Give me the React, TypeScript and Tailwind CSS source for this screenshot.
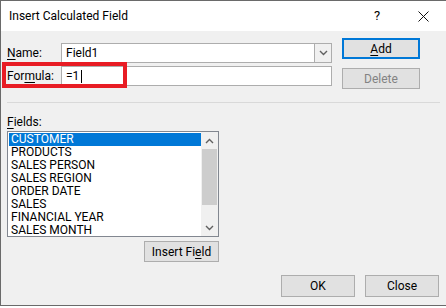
import React from 'react';

const fields = [
  'CUSTOMER',
  'PRODUCTS',
  'SALES PERSON',
  'SALES REGION',
  'ORDER DATE',
  'SALES',
  'FINANCIAL YEAR',
  'SALES MONTH',
];

function Chevron({ up = false, className = '' }: { up?: boolean; className?: string }) {
  return (
    <svg width="9" height="6" viewBox="0 0 9 6" className={className}>
      <polyline
        points={up ? '1,5 4.5,1.5 8,5' : '1,1 4.5,4.5 8,1'}
        fill="none"
        stroke="currentColor"
        strokeWidth="1.4"
      />
    </svg>
  );
}

function Btn({
  children,
  focused = false,
  disabled = false,
  className = '',
}: {
  children: React.ReactNode;
  focused?: boolean;
  disabled?: boolean;
  className?: string;
}) {
  return (
    <div
      className={`flex items-center justify-center bg-[#e1e1e1] ${
        focused ? 'border-2 border-[#0078d7]' : 'border border-[#adadad]'
      } ${disabled ? 'text-[#838383]' : 'text-black'} ${className}`}
    >
      {children}
    </div>
  );
}

export default function App() {
  return (
    <div className="w-[446px] h-[308px] bg-white overflow-hidden text-[12px] text-black font-['Roboto',sans-serif]">
      <div className="h-[306px] border-l border-t border-b border-[#6a6a6a] bg-[#f0f0f0] flex flex-col">
        {/* Title bar */}
        <div className="h-[30px] bg-white flex items-center pl-[8px] shrink-0">
          <span className="flex-1">Insert Calculated Field</span>
          <span className="w-[10px] text-center text-[13px] mr-[36px]">?</span>
          <svg width="11" height="11" viewBox="0 0 11 11" className="mr-[17px]">
            <path d="M0.5 0.5 L10.5 10.5 M10.5 0.5 L0.5 10.5" stroke="#111" strokeWidth="1" />
          </svg>
        </div>

        {/* Body */}
        <div className="relative flex-1 flex flex-col px-[6px] pt-[7px]">
          <div className="flex">
            <div className="w-[325px] pt-[5px] flex flex-col gap-[3px]">
              <div className="flex items-center h-[20px]">
                <span className="w-[54px]">
                  <span className="underline underline-offset-2">N</span>ame:
                </span>
                <div className="flex-1 h-[20px] flex bg-white border border-[#adadad]">
                  <span className="flex-1 pl-[4px] leading-[18px]">Field1</span>
                  <div className="w-[17px] bg-[#f0f0f0] border-l border-[#adadad] flex items-center justify-center text-[#606060]">
                    <Chevron />
                  </div>
                </div>
              </div>
              <div className="flex items-center h-[20px]">
                <span className="w-[54px]">
                  For<span className="underline underline-offset-2">m</span>ula:
                </span>
                <div className="flex-1 h-[20px] flex items-center bg-white border border-[#adadad] pl-[4px]">
                  <span>=1</span>
                  <span className="w-px h-[13px] bg-black ml-[2px]" />
                </div>
              </div>
            </div>
            <div className="ml-[10px] w-[78px] flex flex-col gap-[9px]">
              <Btn focused className="h-[21px]">
                <span>
                  <span className="underline underline-offset-2">A</span>dd
                </span>
              </Btn>
              <Btn disabled className="h-[21px]">
                Delete
              </Btn>
            </div>
          </div>

          <div className="mt-[13px] h-px bg-[#d9d9d9]" />

          <div className="mt-[11px] leading-[16px]">
            <span className="underline underline-offset-2">F</span>ields:
          </div>

          <div className="mt-[1px] w-[212px] flex flex-col items-end">
            <div className="w-[212px] h-[106px] bg-white border border-[#828790] flex">
              <div className="flex-1 pl-px pt-px">
                {fields.map((f, i) => (
                  <div
                    key={f}
                    className={`h-[13px] leading-[13px] pl-[2px] ${
                      i === 0 ? 'bg-[#0078d7] text-white' : ''
                    }`}
                  >
                    {f}
                  </div>
                ))}
              </div>
              <div className="w-[17px] bg-[#f0f0f0] flex flex-col items-center text-[#606060]">
                <div className="h-[17px] flex items-center justify-center">
                  <Chevron up />
                </div>
                <div className="w-[15px] h-[56px] bg-[#cdcdcd]" />
                <div className="flex-1" />
                <div className="h-[17px] flex items-center justify-center">
                  <Chevron />
                </div>
              </div>
            </div>
            <Btn className="mt-[4px] w-[75px] h-[21px]">
              <span>
                Insert Fi<span className="underline underline-offset-2">e</span>ld
              </span>
            </Btn>
          </div>

          <div className="mt-[13px] flex justify-end gap-[10px] pr-[1px]">
            <Btn className="w-[74px] h-[22px]">OK</Btn>
            <Btn className="w-[74px] h-[22px]">Close</Btn>
          </div>

          {/* red annotation box */}
          <div className="absolute left-[1px] top-[31px] w-[125px] h-[26px] border-[4px] border-[#e81c24]" />
        </div>
      </div>
    </div>
  );
}
